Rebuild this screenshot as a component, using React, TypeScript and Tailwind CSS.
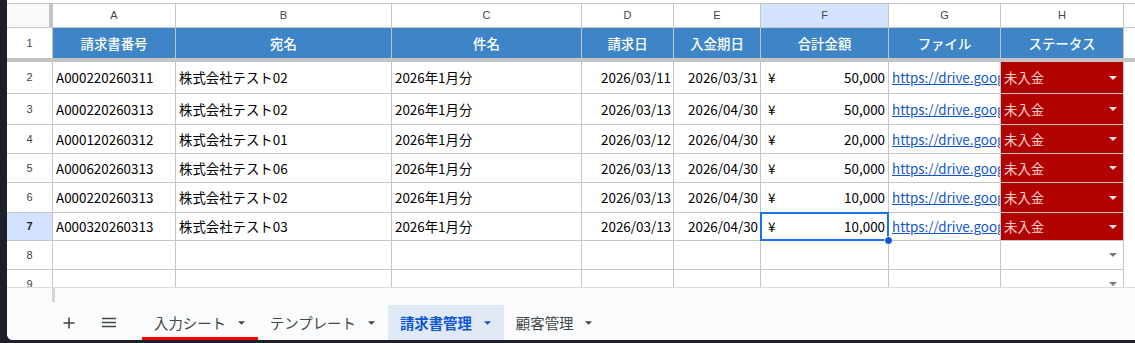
import React from "react";

const COLS = [
  { key: "A", w: 123, label: "請求書番号" },
  { key: "B", w: 216, label: "宛名" },
  { key: "C", w: 190, label: "件名" },
  { key: "D", w: 92, label: "請求日" },
  { key: "E", w: 87, label: "入金期日" },
  { key: "F", w: 128, label: "合計金額" },
  { key: "G", w: 112, label: "ファイル" },
  { key: "H", w: 123, label: "ステータス" },
];

const DATA = [
  { n: 2, h: 32, a: "A000220260311", b: "株式会社テスト02", d: "2026/03/11", e: "2026/03/31", f: "50,000" },
  { n: 3, h: 31, a: "A000220260313", b: "株式会社テスト02", d: "2026/03/13", e: "2026/04/30", f: "50,000" },
  { n: 4, h: 29, a: "A000120260312", b: "株式会社テスト01", d: "2026/03/12", e: "2026/04/30", f: "20,000" },
  { n: 5, h: 29, a: "A000620260313", b: "株式会社テスト06", d: "2026/03/13", e: "2026/04/30", f: "50,000" },
  { n: 6, h: 30, a: "A000220260313", b: "株式会社テスト02", d: "2026/03/13", e: "2026/04/30", f: "10,000" },
  { n: 7, h: 28, a: "A000320260313", b: "株式会社テスト03", d: "2026/03/13", e: "2026/04/30", f: "10,000" },
];

const cellFont = { fontFamily: '"Noto Sans CJK JP", "Noto Sans", sans-serif' };
const hdrFont = { fontFamily: '"Liberation Sans", Arial, sans-serif' };

function Tri({ color, w = 8, h = 4 }: { color: string; w?: number; h?: number }) {
  return (
    <svg width={w} height={h} viewBox="0 0 8 4" className="shrink-0">
      <path d="M0 0 L8 0 L4 4 Z" fill={color} />
    </svg>
  );
}

function RowHeader({ n, h, selected }: { n: number; h: number; selected?: boolean }) {
  return (
    <div
      className={`w-[46px] shrink-0 border-r border-b border-[#c6c6c6] flex items-center justify-center text-[11px] ${
        selected ? "bg-[#d3e3fd] text-[#041e49] font-bold" : "bg-white text-[#444]"
      }`}
      style={{ ...hdrFont, height: h }}
    >
      {n}
    </div>
  );
}

function Tab({ label, active, underline }: { label: string; active?: boolean; underline?: boolean }) {
  return (
    <div
      className={`relative h-[35px] flex items-center gap-[12px] pl-[12px] pr-[13px] text-[14.4px] ${
        active ? "bg-[#e1e9f7] text-[#0b57d0] font-bold" : "text-[#444746]"
      }`}
    >
      <span>{label}</span>
      <Tri color={active ? "#0b57d0" : "#444746"} w={7} h={4} />
      {underline && <div className="absolute left-0 right-0 bottom-0 h-[3px] bg-[#ff0000]" />}
    </div>
  );
}

export default function App() {
  return (
    <div className="w-[1135px] h-[343px] bg-[#1f1f29] flex overflow-hidden" style={cellFont}>
      <div className="w-[7px] shrink-0" />
      <div className="flex-1 flex flex-col h-[340px] bg-white rounded-bl-[6px] overflow-hidden">
        <div className="h-[287px] shrink-0 flex flex-col overflow-hidden">
          <div className="h-[3px] shrink-0 bg-white" />
          {/* column letters */}
          <div className="flex h-[25px] shrink-0 border-t border-b border-[#c6c6c6]">
            <div className="w-[46px] shrink-0 bg-[#f8f9fa] border-r border-[#c6c6c6] flex justify-end">
              <div className="w-[3px] h-full bg-[#c4c4c4]" />
            </div>
            {COLS.map((c) => (
              <div
                key={c.key}
                className={`shrink-0 border-r border-[#c6c6c6] flex items-center justify-center text-[11px] text-[#444] ${
                  c.key === "F" ? "bg-[#d3e3fd]" : "bg-white"
                }`}
                style={{ ...hdrFont, width: c.w }}
              >
                {c.key}
              </div>
            ))}
            <div className="flex-1" />
          </div>
          {/* row 1 headers */}
          <div className="flex h-[30px] shrink-0">
            <div className="w-[46px] shrink-0 border-r border-[#c6c6c6] flex items-center justify-center text-[11px] text-[#444]" style={hdrFont}>
              1
            </div>
            {COLS.map((c) => (
              <div
                key={c.key}
                className="shrink-0 border-r border-[#c6c6c6] bg-[#3d85c6] flex items-center justify-center text-[13.4px] text-white font-medium"
                style={{ width: c.w }}
              >
                {c.label}
              </div>
            ))}
            <div className="flex-1" />
          </div>
          <div className="h-[4px] shrink-0 bg-[#c4c4c4]" />
          {/* data rows */}
          {DATA.map((r) => {
            const sel = r.n === 7;
            return (
              <div key={r.n} className="flex shrink-0" style={{ height: r.h }}>
                <RowHeader n={r.n} h={r.h} selected={sel} />
                <div className="shrink-0 border-r border-b border-[#c6c6c6] flex items-center pl-[3px] text-[13.4px] text-black" style={{ width: 123 }}>
                  {r.a}
                </div>
                <div className="shrink-0 border-r border-b border-[#c6c6c6] flex items-center pl-[3px] text-[13.4px] text-black" style={{ width: 216 }}>
                  {r.b}
                </div>
                <div className="shrink-0 border-r border-b border-[#c6c6c6] flex items-center pl-[3px] text-[13.4px] text-black" style={{ width: 190 }}>
                  2026年1月分
                </div>
                <div className="shrink-0 border-r border-b border-[#c6c6c6] flex items-center justify-end pr-[2px] text-[13.4px] text-black" style={{ width: 92 }}>
                  {r.d}
                </div>
                <div className="shrink-0 border-r border-b border-[#c6c6c6] flex items-center justify-end pr-[2px] text-[13.4px] text-black" style={{ width: 87 }}>
                  {r.e}
                </div>
                <div className="relative shrink-0 border-r border-b border-[#c6c6c6] flex items-center justify-between pl-[7px] pr-[3px] text-[13.4px] text-black" style={{ width: 128 }}>
                  <span>¥</span>
                  <span>{r.f}</span>
                  {sel && (
                    <>
                      <div className="absolute left-[-1px] top-[-1px] right-[-1px] bottom-[-1px] border-2 border-[#1a73e8] pointer-events-none" />
                      <div className="absolute right-[-5px] bottom-[-5px] w-[9px] h-[9px] rounded-full bg-[#0b57d0] border border-white" />
                    </>
                  )}
                </div>
                <div className="shrink-0 border-r border-b border-[#c6c6c6] flex items-center pl-[3px] text-[13.4px] overflow-hidden whitespace-nowrap" style={{ width: 112 }}>
                  <span className="text-[#1155cc] underline">https://drive.goog</span>
                </div>
                <div className="shrink-0 border-r border-b border-[#c6c6c6] bg-[#b10202] flex items-center justify-between pl-[3px] pr-[6px] text-[13.4px] text-[#ffcfc9]" style={{ width: 123 }}>
                  <span>未入金</span>
                  <Tri color="#ffe8e5" />
                </div>
                <div className="flex-1" />
              </div>
            );
          })}
          {[
            { n: 8, h: 29 },
            { n: 9, h: 29 },
          ].map((r) => (
            <div key={r.n} className="flex shrink-0" style={{ height: r.h }}>
              <RowHeader n={r.n} h={r.h} />
              {COLS.map((c) => (
                <div
                  key={c.key}
                  className="shrink-0 border-r border-b border-[#c6c6c6] flex items-center justify-end pr-[6px]"
                  style={{ width: c.w }}
                >
                  {c.key === "H" && <Tri color="#7a7a7a" />}
                </div>
              ))}
              <div className="flex-1" />
            </div>
          ))}
        </div>
        {/* bottom panel */}
        <div className="flex-1 flex flex-col bg-[#f9fbfd] border-t border-[#dadce0]">
          <div className="h-[14px] shrink-0 flex">
            <div className="w-[45px] shrink-0" />
            <div className="w-[3px] h-full bg-[#d4d4d4]" />
          </div>
          <div className="flex-1 flex items-end pl-[50px]">
            <div className="w-[24px] h-[35px] flex items-center justify-center">
              <svg width="12" height="12" viewBox="0 0 12 12">
                <path d="M6 0.5 V11.5 M0.5 6 H11.5" stroke="#444746" strokeWidth="1.6" />
              </svg>
            </div>
            <div className="w-[24px] h-[35px] ml-[16px] flex items-center justify-center">
              <svg width="14" height="11" viewBox="0 0 14 11">
                <path d="M0 1.5 H14 M0 5.5 H14 M0 9.5 H14" stroke="#444746" strokeWidth="1.6" />
              </svg>
            </div>
            <div className="ml-[21px] flex items-end">
              <Tab label="入力シート" underline />
              <Tab label="テンプレート" />
              <Tab label="請求書管理" active />
              <Tab label="顧客管理" />
            </div>
          </div>
        </div>
      </div>
    </div>
  );
}
